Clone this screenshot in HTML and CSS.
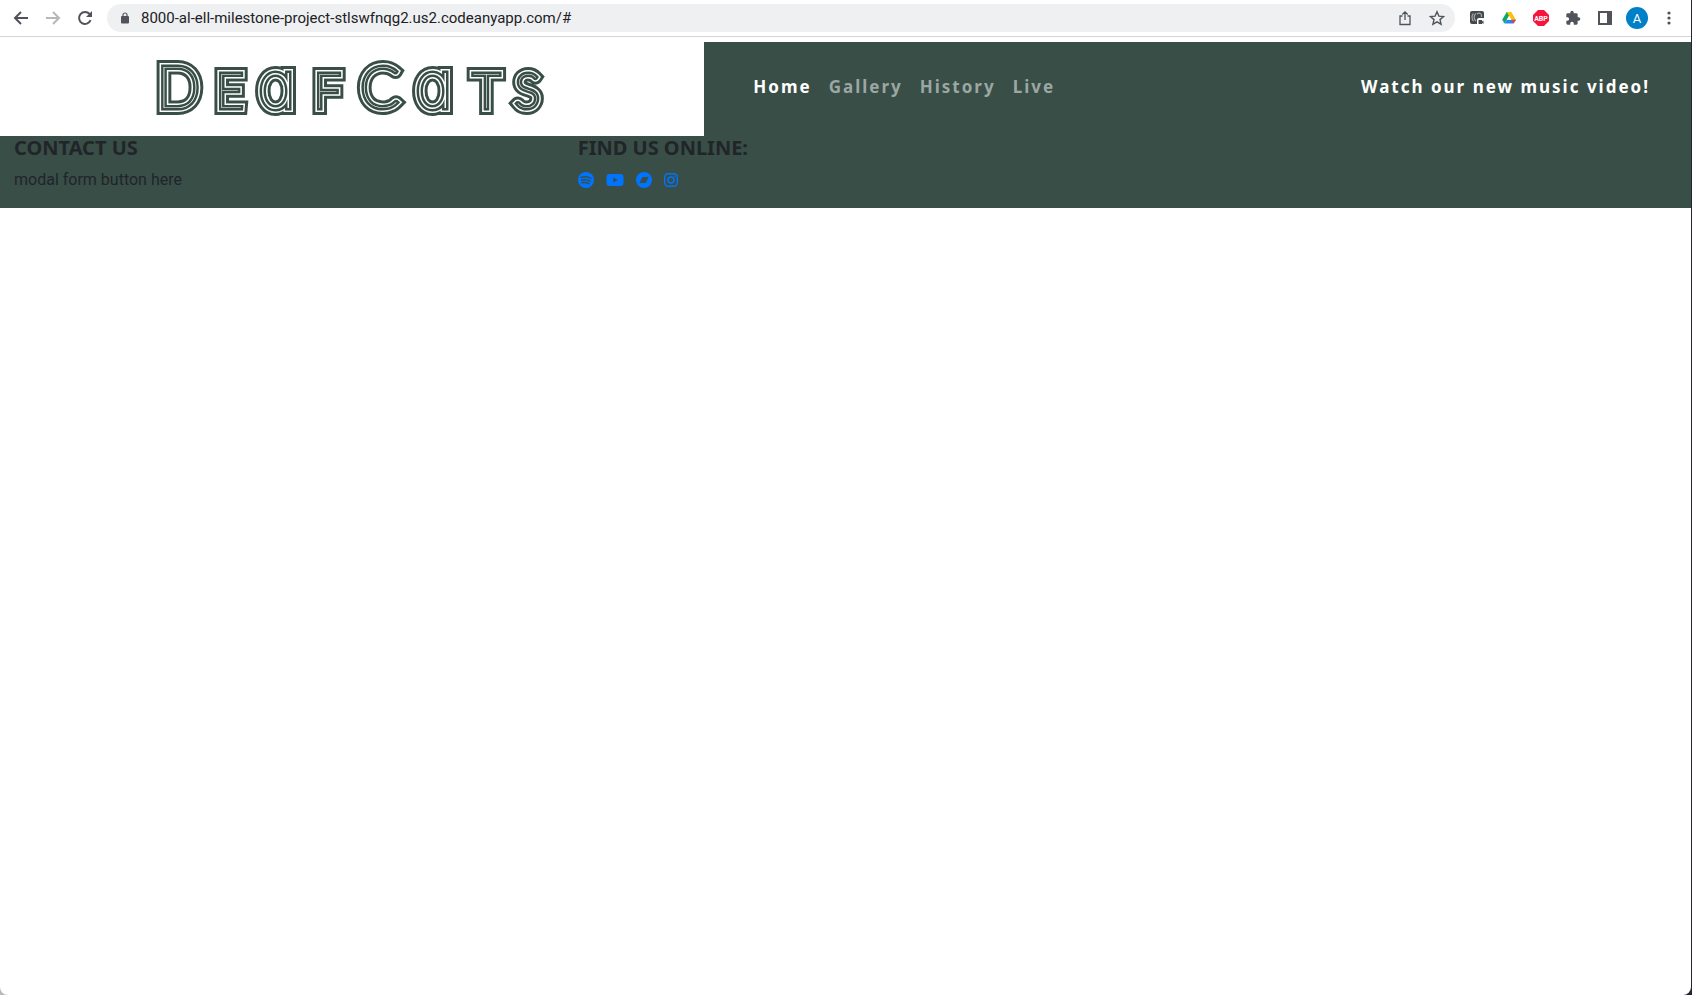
FILE: index.html
```html
<!DOCTYPE html>
<html lang="en">
<head>
<meta charset="utf-8">
<title>Deaf Cats</title>
<link rel="stylesheet" href="styles.css">
</head>
<body>
<div class="window">
  <div class="toolbar">
    <button class="tool" aria-label="Back"><svg class="icon" viewBox="0 0 16 16"><path d="M15 8H2M8 2L2 8l6 6" fill="none" stroke="#50545a" stroke-width="2"/></svg></button>
    <button class="tool" aria-label="Forward"><svg class="icon" viewBox="0 0 16 16"><path d="M1 8h13M8 2l6 6-6 6" fill="none" stroke="#b5b7b9" stroke-width="2"/></svg></button>
    <button class="tool" aria-label="Reload"><svg class="icon" viewBox="0 0 16 16"><path d="M13.6 10.2A6 6 0 1 1 12.6 4" fill="none" stroke="#50545a" stroke-width="2"/><path d="M15 1v6H9z" fill="#50545a"/></svg></button>
    <div class="address">
      <svg class="lock" viewBox="0 0 10 12"><rect x="1" y="4" width="8" height="7.5" rx="1" fill="#50545a"/><path d="M3 5V3a2 2 0 0 1 4 0v2" fill="none" stroke="#50545a" stroke-width="1.2"/></svg>
      <input class="url" type="text" aria-label="Address" value="8000-al-ell-milestone-project-stlswfnqg2.us2.codeanyapp.com/#">
      <button class="tool" aria-label="Share"><svg class="icon" viewBox="0 0 16 16"><path d="M5.5 6H3v8.500h10V6h-2.500M8 10V2M5.300 4.500L8 1.800l2.700 2.700" fill="none" stroke="#50545a" stroke-width="1.300"/></svg></button>
      <button class="tool" aria-label="Bookmark"><svg class="icon" viewBox="0 0 16 16"><path d="M8 1.800l1.900 4.300 4.700.4-3.600 3.100 1.100 4.600L8 11.800l-4.100 2.400L5 9.600 1.400 6.500l4.700-.4z" fill="none" stroke="#50545a" stroke-width="1.400"/></svg></button>
    </div>
    <div class="extensions">
      <button class="tool" aria-label="Screen capture"><svg class="icon" viewBox="0 0 16 16"><rect x="1" y="1" width="14" height="13" rx="2" fill="#45494b"/><path d="M4.500 3.500c-2 1-2 6 0 7.500M7 3.500c-3 2-2 6 0 7.500M8 4c3-2 5 0 4.500 3" fill="none" stroke="#a6a8aa" stroke-width="1.200"/><rect x="8" y="8" width="8" height="8" rx="2" fill="#fff"/><path d="M9.500 10h3.500v1.500l1.500-1v3.500l-1.500-1V14H9.500z" fill="#45494b"/></svg></button>
      <button class="tool" aria-label="Drive"><svg class="icon" viewBox="0 0 16 16"><path d="M5.700 2h4.600L8 6 3.500 13.500 1.200 9.800z" fill="#0da960"/><path d="M5.700 2h4.600l4.600 7.700h-4.600z" fill="#ffc107"/><path d="M3.500 13.500l2.300-3.800h9.100l-2.300 3.800z" fill="#2684fc"/><path d="M10.300 9.700h4.600l-2.300 3.800z" fill="#ea4335"/><path d="M8 6l2.300 3.700H5.800z" fill="#fff"/></svg></button>
      <button class="tool" aria-label="Adblock Plus"><svg class="icon" viewBox="0 0 16 16"><path d="M5 0h6l5 5v6l-5 5H5l-5-5V5z" fill="#f5163c"/><text class="abp" x="8" y="10.500" text-anchor="middle">ABP</text></svg></button>
      <button class="tool" aria-label="Extensions"><svg class="icon" viewBox="0 0 24 24"><path d="M20.500 11H19V7a2 2 0 0 0-2-2h-4V3.500a2.500 2.500 0 0 0-5 0V5H4a2 2 0 0 0-2 2v3.800h1.500a2.700 2.700 0 0 1 0 5.400H2V20a2 2 0 0 0 2 2h3.800v-1.500a2.700 2.700 0 0 1 5.400 0V22H17a2 2 0 0 0 2-2v-4h1.500a2.500 2.500 0 0 0 0-5z" fill="#50545a"/></svg></button>
      <button class="tool" aria-label="Side panel"><svg class="icon" viewBox="0 0 16 16"><path d="M2 2h12v12H2z" fill="none" stroke="#50545a" stroke-width="2"/><path d="M10 2h4v12h-4z" fill="#50545a"/></svg></button>
      <button class="avatar">A</button>
      <button class="tool" aria-label="Menu"><svg class="icon" viewBox="0 0 16 16" fill="#50545a"><circle cx="8" cy="3" r="1.600"/><circle cx="8" cy="8" r="1.600"/><circle cx="8" cy="13" r="1.600"/></svg></button>
    </div>
  </div>

  <header class="header">
    <a class="brand" href="#" aria-label="Deaf Cats">
      <svg class="logo" viewBox="0 0 400 66">
        <defs>
          <text id="wordmark" y="52"><tspan class="tall" x="5">D</tspan><tspan class="small" x="64">E</tspan><tspan class="round" x="106">a</tspan><tspan class="small" x="162">F</tspan><tspan class="tall" x="208">C</tspan><tspan class="round" x="263">a</tspan><tspan class="small" x="321">T</tspan><tspan class="small" x="363">S</tspan></text>
        </defs>
        <use href="#wordmark" class="band-outer"/>
        <use href="#wordmark" class="band-gap"/>
        <use href="#wordmark" class="band-inner"/>
      </svg>
    </a>
    <nav class="nav">
      <a class="link active" href="#">Home</a>
      <a class="link" href="#">Gallery</a>
      <a class="link" href="#">History</a>
      <a class="link" href="#">Live</a>
      <a class="link active video" href="#">Watch our new music video!</a>
    </nav>
  </header>

  <footer class="footer">
    <section class="column">
      <h2 class="title">CONTACT US</h2>
      <p class="note">modal form button here</p>
    </section>
    <section class="column">
      <h2 class="title">FIND US ONLINE:</h2>
      <div class="social">
        <a href="#" aria-label="Spotify"><svg class="icon" viewBox="0 0 16 16"><circle cx="8" cy="8" r="8" fill="#0074ff"/><path d="M3 5.300c3.500-1 7-.6 10 1M3.500 8.200c3-.8 6-.4 8.500 1M4 10.800c2.500-.6 5-.3 7 .9" fill="none" stroke="#384e47" stroke-width="1.400" stroke-linecap="round"/></svg></a>
        <a href="#" aria-label="YouTube"><svg class="icon wide" viewBox="0 0 18 16"><rect x="0.500" y="2" width="17" height="12" rx="3" fill="#0074ff"/><path d="M7.300 5.400v5.200L11.800 8z" fill="#384e47"/></svg></a>
        <a href="#" aria-label="Bandcamp"><svg class="icon" viewBox="0 0 16 16"><circle cx="8" cy="8" r="8" fill="#0074ff"/><path d="M6.500 5h6.200l-3 6H3.400z" fill="#384e47"/></svg></a>
        <a href="#" aria-label="Instagram"><svg class="icon" viewBox="0 0 16 16" fill="none" stroke="#0074ff" stroke-width="1.400"><rect x="0.700" y="1.700" width="12.600" height="12.600" rx="3.500"/><circle cx="7" cy="8" r="3"/><circle cx="10.700" cy="4.300" r=".8" fill="#0074ff" stroke="none"/></svg></a>
      </div>
    </section>
  </footer>
</div>
</body>
</html>
```
FILE: styles.css
```css
* { box-sizing: border-box; }
html { background: #2b2f3c; }
body { margin: 0; background: linear-gradient(90deg, #b9b9b9 50%, #1f2732 50%); font-family: Roboto, "Liberation Sans", sans-serif; font-size: 16px; color: #212529; }
button { border: 0; padding: 0; background: none; font: inherit; }
a { color: inherit; text-decoration: none; }
.window { min-height: 100vh; margin-right: 1px; background: #fff; border-radius: 0 0 8px 8px; overflow: hidden; }
.icon { display: block; width: 16px; height: 16px; }
.wide { width: 18px; }

.toolbar { display: flex; align-items: center; height: 37px; padding: 0 14px 0 13px; gap: 16px; border-bottom: 1px solid #d4d5d6; }
.tool { flex: none; display: block; }
.address { flex: 1; display: flex; align-items: center; gap: 16px; height: 28px; margin-left: -2px; padding: 0 10px 0 13px; border-radius: 14px; background: #eff0f2; }
.lock { flex: none; width: 10px; height: 12px; }
.url { flex: 1; min-width: 0; margin-left: -5px; padding: 0; border: 0; background: none; font: 15px Roboto, sans-serif; color: #202124; outline: 0; }
.extensions { display: flex; align-items: center; gap: 16px; margin-left: -2px; }
.abp { font: bold 7px Roboto, sans-serif; fill: #fff; }
.avatar { width: 22px; height: 22px; margin: 0 -3px; border-radius: 50%; background: #0080c8; color: #fff; font-size: 13px; }

.header { display: flex; margin-top: 5px; }
.brand { width: 41.65%; height: 94px; display: flex; align-items: center; justify-content: center; }
.logo { width: 400px; height: 66px; font-family: Lato, sans-serif; font-weight: 100; overflow: visible; will-change: transform; }
.tall { font-size: 57px; }
.small { font-size: 47px; }
.round { font-family: Inter, sans-serif; font-size: 64px; font-feature-settings: "cv11"; }
.band-outer { fill: #384e47; stroke: #384e47; stroke-width: 14px; }
.band-gap { fill: #fff; stroke: #fff; stroke-width: 8px; }
.band-inner { fill: #fff; stroke: #384e47; stroke-width: 5px; paint-order: stroke; }

.nav { flex: 1; display: flex; align-items: center; gap: 17px; padding: 0 41px 6px 49px; background: #384e47; font-family: "Noto Sans", sans-serif; font-size: 17px; font-weight: 700; letter-spacing: 2px; }
.link { color: #9ca7a4; }
.active { color: #fff; }
.video { margin-left: auto; }

.footer { display: flex; height: 72px; background: #384e47; }
.column { width: 33.3333%; padding: 0 14px; }
.title { margin: 0 0 8px; font: 700 20px/24px "Noto Sans", sans-serif; }
.note { margin: 0; line-height: 24px; }
.social { display: flex; align-items: center; gap: 12px; height: 24px; }
```
